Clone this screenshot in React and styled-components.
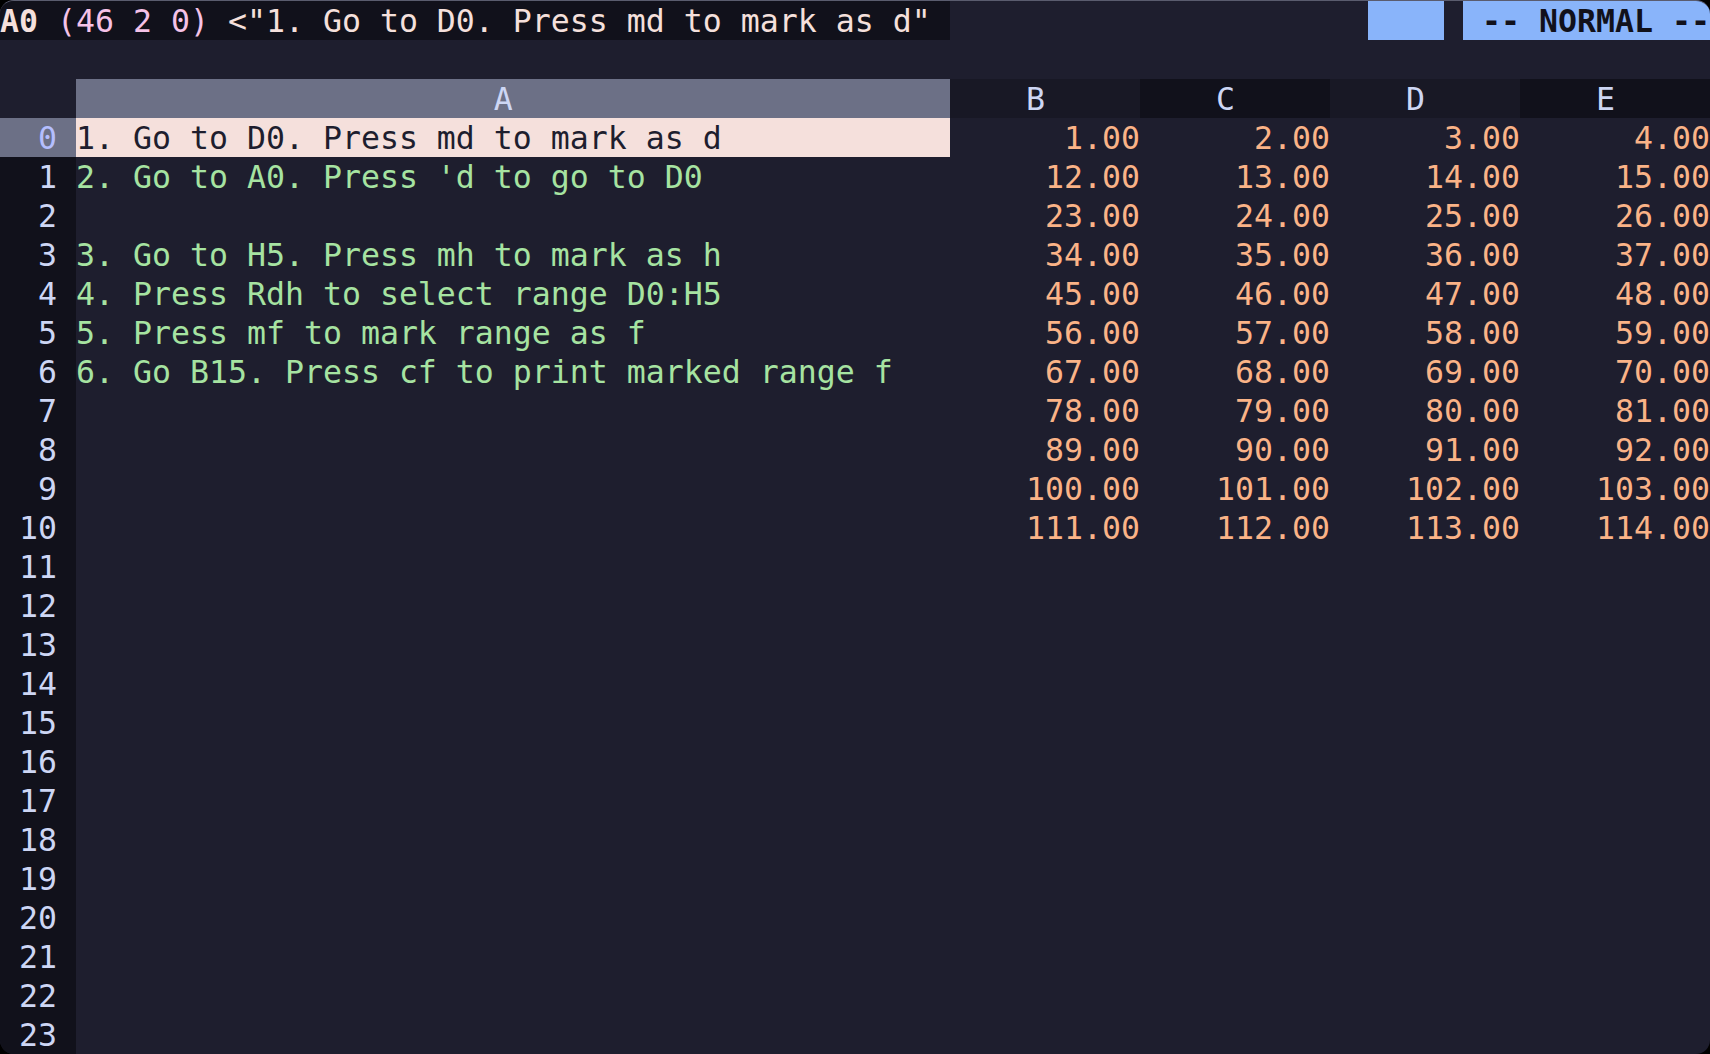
import React from "react";
import styled, { createGlobalStyle } from "styled-components";

const GlobalStyle = createGlobalStyle`
  html, body {
    margin: 0;
    padding: 0;
    background: #000;
  }
`;

const CELL = 19;
const ROW = 39;

const Screen = styled.div`
  width: 1710px;
  height: 1054px;
  box-sizing: border-box;
  border-top: 1px solid #5a5c6e;
  border-radius: 14px;
  overflow: hidden;
  background: #1e1e2e;
  font-family: "DejaVu Sans Mono", "Liberation Mono", monospace;
  font-size: 31.56px;
  white-space: pre;
`;

const Line = styled.div`
  display: grid;
  height: ${ROW}px;
  box-sizing: border-box;
  padding-top: 2px;
  line-height: 37px;
`;

const StatusBar = styled(Line)`
  grid-template-columns: ${50 * CELL}px ${22 * CELL}px ${4 * CELL}px ${CELL}px 1fr;
`;

const CellInfo = styled.div`
  background: #11111b;
  color: #f5e0dc;
  margin-top: -2px;
  padding-top: 2px;
`;

const Addr = styled.span`
  font-weight: bold;
  color: #f5e0dc;
`;

const Coords = styled.span`
  color: #f5c2e7;
`;

const Block = styled.div`
  margin-top: -2px;
  padding-top: 2px;
  background: ${p => (p.$on ? "#89b4fa" : "transparent")};
  color: #11111b;
  font-weight: bold;
`;

const Blank = styled.div`
  height: ${ROW}px;
`;

const Sheet = styled.div`
  display: grid;
  grid-template-columns: ${4 * CELL}px ${46 * CELL}px repeat(4, ${10 * CELL}px);
  grid-auto-rows: ${ROW}px;
`;

const Cell = styled.div`
  box-sizing: border-box;
  padding-top: 2px;
  line-height: 37px;
  overflow: hidden;
`;

const Corner = styled(Cell)`
  background: #1e1e2e;
`;

const ColHead = styled(Cell)`
  background: ${p => (p.$active ? "#6c7086" : p.$alt ? "#11111b" : "#181825")};
  color: #cdd6f4;
`;

const RowNum = styled(Cell)`
  background: ${p => (p.$active ? "#6c7086" : "#11111b")};
  color: ${p => (p.$active ? "#b4befe" : "#cdd6f4")};
  text-align: right;
  padding-right: ${CELL}px;
`;

const TextCell = styled(Cell)`
  background: ${p => (p.$selected ? "#f5e0dc" : "transparent")};
  color: ${p => (p.$selected ? "#1e1e2e" : "#a6e3a1")};
`;

const NumCell = styled(Cell)`
  color: #fab387;
  text-align: right;
`;

const notes = [
  "1. Go to D0. Press md to mark as d",
  "2. Go to A0. Press 'd to go to D0",
  "",
  "3. Go to H5. Press mh to mark as h",
  "4. Press Rdh to select range D0:H5",
  "5. Press mf to mark range as f",
  "6. Go B15. Press cf to print marked range f"
];

const headers = [
  { label: "A", width: 46 },
  { label: "B", width: 10 },
  { label: "C", width: 10 },
  { label: "D", width: 10 },
  { label: "E", width: 10 }
];

const centre = (label, width) =>
  " ".repeat(Math.floor((width - label.length) / 2)) + label;

const rows = Array.from({ length: 24 }, (_, r) => ({
  note: notes[r] || "",
  values: r <= 10 ? [0, 1, 2, 3].map(c => (11 * r + 1 + c).toFixed(2)) : []
}));

export default function App() {
  return (
    <>
      <GlobalStyle />
      <Screen>
        <StatusBar>
          <CellInfo>
            <Addr>A0</Addr> <Coords>(46 2 0)</Coords>
            {' <"1. Go to D0. Press md to mark as d"'}
          </CellInfo>
          <Block />
          <Block $on />
          <Block />
          <Block $on>{" -- NORMAL --"}</Block>
        </StatusBar>
        <Blank />
        <Sheet>
          <Corner />
          {headers.map((h, i) => (
            <ColHead key={h.label} $active={i === 0} $alt={i > 0 && i % 2 === 0}>
              {centre(h.label, h.width)}
            </ColHead>
          ))}
          {rows.map((row, r) => (
            <React.Fragment key={r}>
              <RowNum $active={r === 0}>{r}</RowNum>
              <TextCell $selected={r === 0}>{row.note}</TextCell>
              {[0, 1, 2, 3].map(c => (
                <NumCell key={c}>{row.values[c] || ""}</NumCell>
              ))}
            </React.Fragment>
          ))}
        </Sheet>
      </Screen>
    </>
  );
}
